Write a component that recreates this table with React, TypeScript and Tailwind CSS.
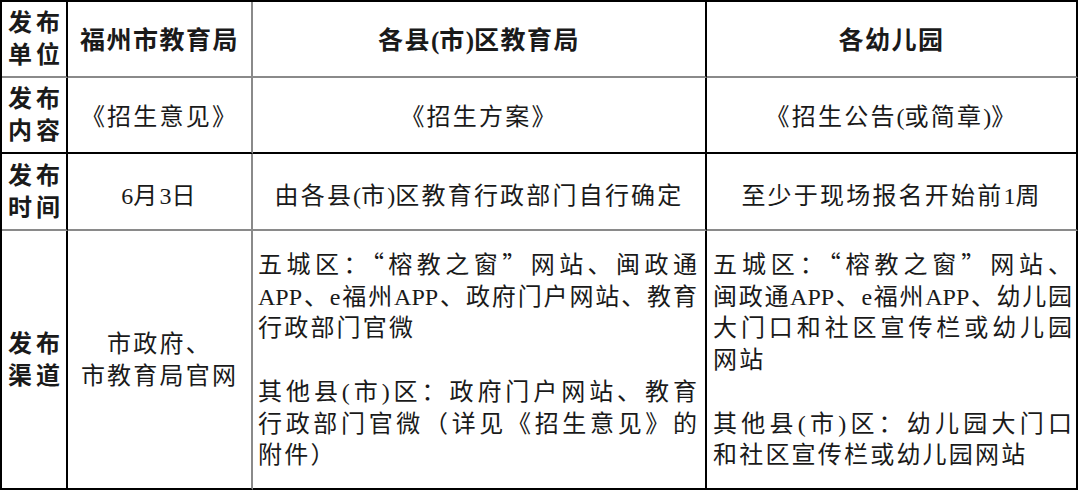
import React from "react";

const font = {
  fontFamily: '"Liberation Serif", "Noto Sans CJK SC", serif',
};

const J = "text-justify [text-align-last:justify] whitespace-nowrap tracking-normal";

function Q({ children }: { children: React.ReactNode }) {
  return <span className="[font-family:'Noto_Sans_CJK_SC',sans-serif]">{children}</span>;
}

function L({ children }: { children: React.ReactNode }) {
  return <span className="tracking-normal">{children}</span>;
}

export default function App() {
  const base = "flex items-center justify-center border-r-2 border-b-2";
  const head = "font-bold text-[25px] tracking-[1.5px] pt-[4px]";
  const side = "px-[6px] font-bold text-[24px] tracking-normal";
  return (
    <div className="w-[1080px] h-[491px] bg-white">
      <div
        className="w-[1078px] grid grid-cols-[66px_185px_454px_371px] grid-rows-[76px_76px_77px_259px] border-l-2 border-t-2 border-black text-[#1a1a1a] text-[24px] tracking-[2.2px] leading-[32px]"
        style={font}
      >
        {/* Row 1 */}
        <div className={`${base} border-r-black border-b-[#8a8a8a] ${side}`}>
          <div className="w-full">
            <div className={J}>发布</div>
            <div className={J}>单位</div>
          </div>
        </div>
        <div className={`${base} border-r-[#8a8a8a] border-b-[#8a8a8a] ${head}`}>福州市教育局</div>
        <div className={`${base} border-r-black border-b-[#8a8a8a] ${head}`}>
          各县<L>(</L>市<L>)</L>区教育局
        </div>
        <div className={`${base} border-r-black border-b-[#8a8a8a] ${head}`}>各幼儿园</div>

        {/* Row 2 */}
        <div className={`${base} border-r-black border-b-black ${side}`}>
          <div className="w-full">
            <div className={J}>发布</div>
            <div className={J}>内容</div>
          </div>
        </div>
        <div className={`${base} border-r-[#8a8a8a] border-b-black pt-[4px]`}>《招生意见》</div>
        <div className={`${base} border-r-black border-b-black pt-[4px]`}>《招生方案》</div>
        <div className={`${base} border-r-black border-b-black pt-[4px]`}>
          《招生公告<L>(</L>或简章<L>)</L>》
        </div>

        {/* Row 3 */}
        <div className={`${base} border-r-black border-b-[#8a8a8a] ${side}`}>
          <div className="w-full">
            <div className={J}>发布</div>
            <div className={J}>时间</div>
          </div>
        </div>
        <div className={`${base} border-r-[#8a8a8a] border-b-[#8a8a8a] pt-[8px]`}>
          <L>6</L>月<L>3</L>日
        </div>
        <div className={`${base} border-r-black border-b-[#8a8a8a] pt-[8px]`}>
          由各县<L>(</L>市<L>)</L>区教育行政部门自行确定
        </div>
        <div className={`${base} border-r-black border-b-[#8a8a8a] pt-[8px]`}>
          至少于现场报名开始前<L>1</L>周
        </div>

        {/* Row 4 */}
        <div className={`${base} border-r-black border-b-black ${side}`}>
          <div className="w-full">
            <div className={J}>发布</div>
            <div className={J}>渠道</div>
          </div>
        </div>
        <div className={`${base} border-r-[#8a8a8a] border-b-black flex-col`}>
          <div>市政府、</div>
          <div>市教育局官网</div>
        </div>
        <div className="flex items-center border-r-2 border-b-2 border-r-black border-b-black pl-[5px] pr-[8px] leading-[31.7px]">
          <div className="w-full">
            <div className={J}>
              五城区：<Q>“</Q>榕教之窗<Q>”</Q>网站、闽政通
            </div>
            <div className={J}>APP、e福州APP、政府门户网站、教育</div>
            <div>行政部门官微</div>
            <div>&nbsp;</div>
            <div className={J}>其他县(市)区：政府门户网站、教育</div>
            <div className={J}>行政部门官微（详见《招生意见》的</div>
            <div>附件）</div>
          </div>
        </div>
        <div className="flex items-center border-r-2 border-b-2 border-black pl-[6px] pr-[4px] leading-[31.7px]">
          <div className="w-full">
            <div className={J}>
              五城区：<Q>“</Q>榕教之窗<Q>”</Q>网站、
            </div>
            <div className={J}>闽政通APP、e福州APP、幼儿园</div>
            <div className={J}>大门口和社区宣传栏或幼儿园</div>
            <div>网站</div>
            <div>&nbsp;</div>
            <div className={J}>其他县(市)区：幼儿园大门口</div>
            <div>和社区宣传栏或幼儿园网站</div>
          </div>
        </div>
      </div>
    </div>
  );
}
